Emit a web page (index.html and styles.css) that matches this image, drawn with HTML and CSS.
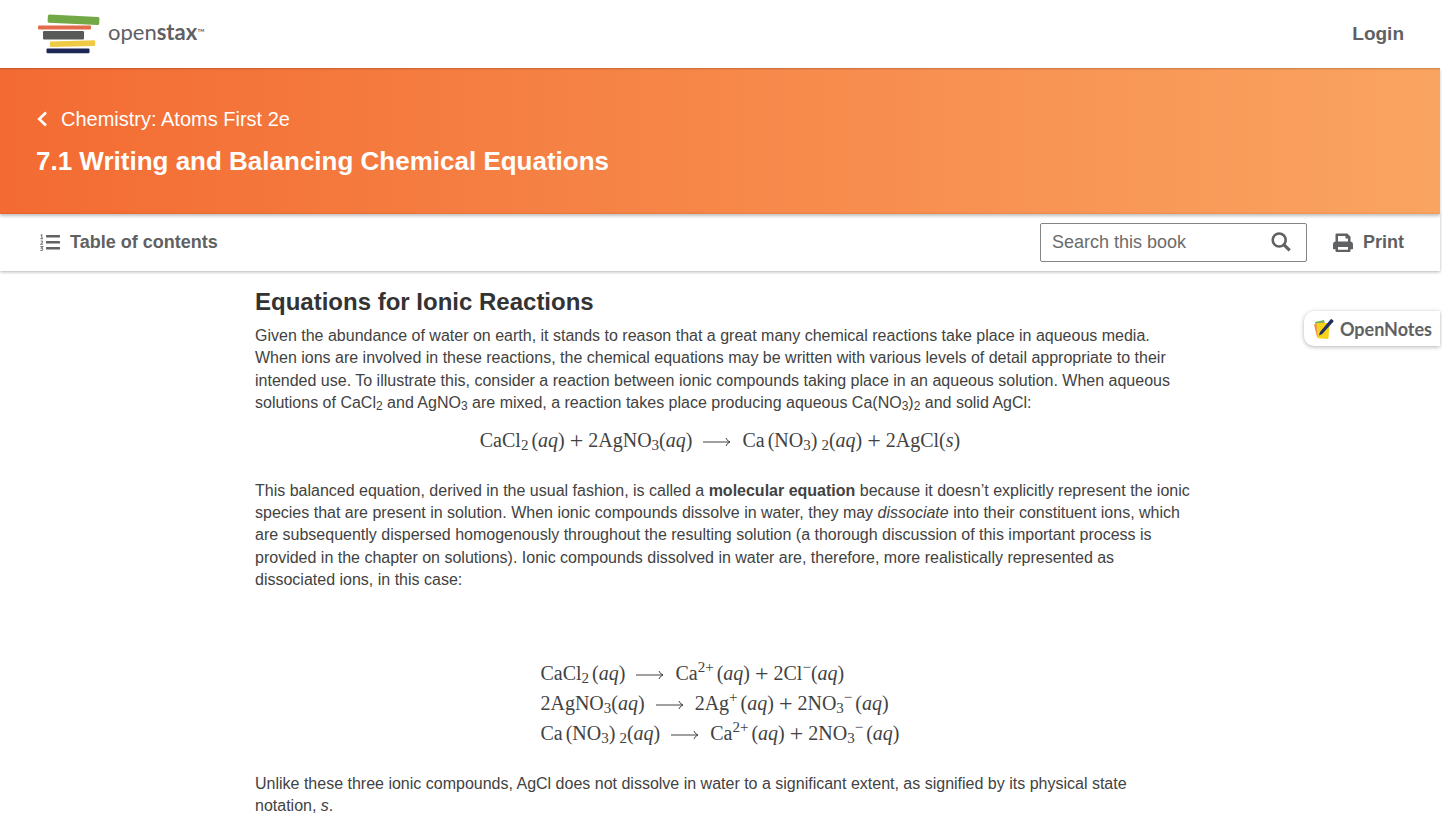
FILE: index.html
```html
<!DOCTYPE html>
<html lang="en">
<head>
<meta charset="utf-8">
<title>7.1 Writing and Balancing Chemical Equations - Chemistry: Atoms First 2e | OpenStax</title>
<link rel="stylesheet" href="styles.css">
</head>
<body>
<header class="site-header">
  <a class="logo" href="#" aria-label="openstax">
    <svg class="logo-books" width="62" height="40" viewBox="0 0 62 40" aria-hidden="true">
      <path fill="#73a846" d="M11.500.5 60 3q1.500 0 1.500 1.500l-.3 5q0 1.500-1.500 1.500L11 8.800Q9.500 8.700 9.600 7.300L9.900 2Q10 .4 11.500.5z"/>
      <rect x="0" y="11.500" width="53" height="4" rx="1" fill="#e36a4a"/>
      <rect x="5" y="17" width="41" height="8.500" rx="1.200" fill="#585a58"/>
      <path fill="#efcb45" d="m13 27.600 43-1.400q1.200 0 1.200 1v3.600q0 1.200-1.200 1.200l-43 1q-1.100 0-1.100-1v-3.200q0-1.200 1.100-1.200z"/>
      <rect x="8.500" y="34.500" width="43" height="4.700" rx="1" fill="#1c2755"/>
    </svg>
    <span class="wordmark">open<b>stax</b><small>™</small></span>
  </a>
  <a class="login" href="#">Login</a>
</header>

<div class="banner">
  <a class="book-link" href="#">
    <svg width="12" height="16" viewBox="0 0 12 16" aria-hidden="true"><path d="M10 1.500 3.200 8l6.800 6.500" fill="none" stroke="#fff" stroke-width="2.600"/></svg>
    <span>Chemistry: Atoms First 2e</span>
  </a>
  <h1>7.1 Writing and Balancing Chemical Equations</h1>
</div>

<nav class="toolbar">
  <button class="tool" type="button">
    <svg width="20" height="18" viewBox="0 0 20 18" aria-hidden="true">
      <g fill="#5f6163"><rect x="6" y="1" width="14" height="2.400" rx=".5"/><rect x="6" y="7" width="14" height="2.400" rx=".5"/><rect x="6" y="13" width="14" height="2.400" rx=".5"/></g>
      <path d="M.6 1.300 1.800.8v3.700M.5 4.600h2.600M.6 7.300q2-.9 2 .4Q2.500 8.500.7 10.300h2.400M.5 12.600h2.200l-1.300 1.700q1.500 0 1.400 1.200-.3 1.500-2.400.9" fill="none" stroke="#77797b" stroke-width="1.100"/>
    </svg>
    <span>Table of contents</span>
  </button>
  <form class="search">
    <input type="text" placeholder="Search this book" aria-label="Search this book">
    <button type="submit" aria-label="Search">
      <svg width="20" height="22" viewBox="0 0 20 22" aria-hidden="true"><circle cx="8.200" cy="8" r="6.500" fill="none" stroke="#5f6163" stroke-width="2.600"/><path d="m12.800 12.600 5.900 5.800" stroke="#5f6163" stroke-width="3.200"/></svg>
    </button>
  </form>
  <button class="tool print" type="button">
    <svg width="20" height="20" viewBox="0 0 20 20" aria-hidden="true">
      <path fill="#5f6163" fill-rule="evenodd" d="M2.500 1.500Q2.500.5 3.500.5h10.800l3.200 3.200V8.500q2.500.2 2.500 2.700v4.300q0 .7-.7.700h-1.800v1.800q0 1-1 1h-13q-1 0-1-1v-1.800H.7q-.7 0-.7-.7v-4.300Q0 8.700 2.500 8.500zM5 3v5.500h10V5.500h-2.500V3zM5 14v2.700h10V14z"/>
    </svg>
    <span>Print</span>
  </button>
</nav>

<main class="content">
  <h2>Equations for Ionic Reactions</h2>
  <p>Given the abundance of water on earth, it stands to reason that a great many chemical reactions take place in aqueous media.<br>
  When ions are involved in these reactions, the chemical equations may be written with various levels of detail appropriate to their<br>
  intended use. To illustrate this, consider a reaction between ionic compounds taking place in an aqueous solution. When aqueous<br>
  solutions of CaCl<sub>2</sub> and AgNO<sub>3</sub> are mixed, a reaction takes place producing aqueous Ca(NO<sub>3</sub>)<sub>2</sub> and solid AgCl:</p>

  <div class="equation">CaCl<sub>2</sub><span class="state">(<i>aq</i>)</span><span class="op">+</span>2AgNO<sub>3</sub>(<i>aq</i>)<svg class="arrow" viewBox="0 0 28 10" aria-hidden="true"><path d="M0 5h27M23 1q1 3 4 4-3 1-4 4"/></svg>Ca<span class="state">(NO<sub>3</sub>)</span><sub class="apart">2</sub>(<i>aq</i>)<span class="op">+</span>2AgCl(<i>s</i>)</div>

  <p>This balanced equation, derived in the usual fashion, is called a <b>molecular equation</b> because it doesn’t explicitly represent the ionic<br>
  species that are present in solution. When ionic compounds dissolve in water, they may <em>dissociate</em> into their constituent ions, which<br>
  are subsequently dispersed homogenously throughout the resulting solution (a thorough discussion of this important process is<br>
  provided in the chapter on solutions). Ionic compounds dissolved in water are, therefore, more realistically represented as<br>
  dissociated ions, in this case:</p>

  <div class="equation-group">
    <div>CaCl<sub>2</sub><span class="state">(<i>aq</i>)</span><svg class="arrow" viewBox="0 0 28 10" aria-hidden="true"><path d="M0 5h27M23 1q1 3 4 4-3 1-4 4"/></svg>Ca<sup>2+</sup><span class="state">(<i>aq</i>)</span><span class="op">+</span>2Cl<sup>−</sup>(<i>aq</i>)</div>
    <div>2AgNO<sub>3</sub>(<i>aq</i>)<svg class="arrow" viewBox="0 0 28 10" aria-hidden="true"><path d="M0 5h27M23 1q1 3 4 4-3 1-4 4"/></svg>2Ag<sup>+</sup><span class="state">(<i>aq</i>)</span><span class="op">+</span>2NO<sub>3</sub><sup>−</sup><span class="state">(<i>aq</i>)</span></div>
    <div>Ca<span class="state">(NO<sub>3</sub>)</span><sub class="apart">2</sub>(<i>aq</i>)<svg class="arrow" viewBox="0 0 28 10" aria-hidden="true"><path d="M0 5h27M23 1q1 3 4 4-3 1-4 4"/></svg>Ca<sup>2+</sup><span class="state">(<i>aq</i>)</span><span class="op">+</span>2NO<sub>3</sub><sup>−</sup><span class="state">(<i>aq</i>)</span></div>
  </div>

  <p>Unlike these three ionic compounds, AgCl does not dissolve in water to a significant extent, as signified by its physical state<br>
  notation, <em>s</em>.</p>
</main>

<button class="notes" type="button">
  <svg width="20" height="22" viewBox="0 0 20 22" aria-hidden="true">
    <path fill="#70b45a" d="m1 4 9-2 3 13-8 3z"/>
    <path fill="#f08a55" d="M0 6.500 10 4l3 12-10 3z"/>
    <path fill="#f5d316" d="M2.500 6q0-1 1-1h11q1 0 1 1l-1 14q0 1-1 1l-9-.7q-1 0-1-1z"/>
    <path fill="#202d66" d="m5 17.500 1-3.500L16.500 1.500q.6-.9 1.300-.3l1.500 1.200q.6.600 0 1.400L8.200 16z"/>
  </svg>
  <span>OpenNotes</span>
</button>
</body>
</html>
```
FILE: styles.css
```css
* { box-sizing: border-box; }
body {
  margin: 0;
  padding-right: 2px;
  height: 100vh;
  overflow: hidden;
  background: #fff;
  color: #424242;
  font-family: "Liberation Sans", Arial, sans-serif;
}
a { color: inherit; text-decoration: none; }
button { border: 0; padding: 0; background: none; color: inherit; font: inherit; }
svg { flex: none; display: block; }

.site-header {
  display: flex;
  align-items: center;
  justify-content: space-between;
  height: 68px;
  padding: 0 36px 0 38px;
  color: #5f6163;
}
.logo { display: flex; align-items: center; gap: 8px; }
.wordmark { padding-bottom: 4px; font: 22px/24px Lato, sans-serif; }
.wordmark small { font-size: 10px; line-height: 0; vertical-align: 4px; }
.login { font-size: 19px; font-weight: 700; }

.banner {
  height: 146px;
  padding: 38px 36px 0;
  background: linear-gradient(to right, #f36b32, #faa461);
  box-shadow: 0 2px 3px rgba(0, 0, 0, .25), inset 0 3px 2px -2px rgba(0, 0, 0, .2);
  color: #fff;
}
.book-link { display: flex; align-items: center; gap: 13px; font-size: 20px; line-height: 26px; }
.banner h1 { margin: 12px 0 0; font-size: 26px; line-height: 34px; }

.toolbar {
  display: flex;
  align-items: center;
  height: 57px;
  padding: 0 36px 0 40px;
  box-shadow: 0 1px 3px rgba(0, 0, 0, .3);
  color: #5f6163;
}
.tool { display: flex; align-items: center; gap: 10px; font-size: 18px; font-weight: 700; }
.search {
  display: flex;
  align-items: center;
  width: 267px;
  height: 39px;
  margin: 0 26px 0 auto;
  padding: 0 15px 0 11px;
  border: 1px solid #858585;
  border-radius: 2px;
}
.search input {
  flex: 1;
  min-width: 0;
  border: 0;
  padding: 0;
  outline: 0;
  background: none;
  color: #5f6163;
  font: 18px "Liberation Sans", Arial, sans-serif;
}
.search input::placeholder { color: #6b6b6b; opacity: 1; }

.content { max-width: 930px; margin: 0 auto; padding-top: 16px; }
.content h2 { margin: 0 0 8px; color: #333; font-size: 24px; line-height: 30px; }
.content p { margin: 0; font-size: 16px; line-height: 1.4; white-space: nowrap; }
.content p sub { font-size: 12px; line-height: 0; vertical-align: -2px; }

.equation, .equation-group {
  font: 20px/30px "Liberation Serif", serif;
  white-space: nowrap;
}
.equation { margin: 10px 0 25px; text-align: center; }
.equation-group { width: fit-content; margin: 66px auto 25px; }
.equation sub, .equation sup, .equation-group sub, .equation-group sup {
  font-size: 15px;
  line-height: 0;
}
.equation sub, .equation-group sub { vertical-align: -3px; }
.equation sup, .equation-group sup { vertical-align: 8px; }
.state { margin-left: 3px; }
.apart { margin-left: 4px; }
.op { margin: 0 5px; font-size: 24px; line-height: 0; vertical-align: -1px; }
.arrow {
  display: inline-block;
  width: 28px;
  height: 10px;
  margin: 0 11px;
  fill: none;
  stroke: #424242;
  stroke-width: 1;
}

.notes {
  position: absolute;
  top: 311px;
  right: 2px;
  display: flex;
  align-items: center;
  gap: 6px;
  height: 35px;
  padding: 0 8px 0 10px;
  border-radius: 10px 0 0 10px;
  background: #fff;
  box-shadow: 0 1px 4px rgba(0, 0, 0, .3);
  color: #5f6163;
  font: 700 18px Lato, sans-serif;
}
```
